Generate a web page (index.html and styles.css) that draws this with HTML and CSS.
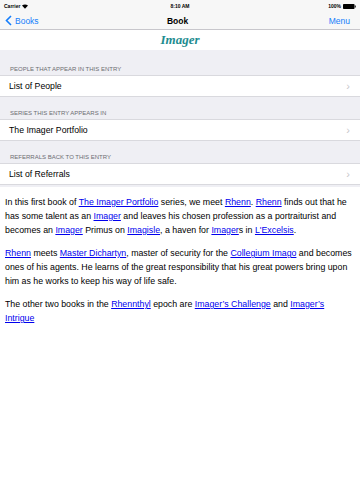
FILE: index.html
```html
<!DOCTYPE html>
<html lang="en">
<head>
    <meta charset="UTF-8">
    <title>Book</title>
    <link rel="stylesheet" href="styles.css">
</head>
<body>
    <div id="topbar">
        <div class="status">
            <span class="carrier">Carrier
                <svg width="6" height="5" viewBox="0 0 12 9"><path d="M6 9 L0 2.5 Q6 -2 12 2.5 Z" fill="#000"/></svg>
            </span>
            <span class="clock">8:10 AM</span>
            <span class="battery">100%
                <svg width="13" height="5" viewBox="0 0 26 10"><rect x="0" y="0" width="23" height="10" rx="1.5" fill="#000"/><rect x="23.5" y="3" width="2" height="4" fill="#000"/></svg>
            </span>
        </div>
        <div class="navbar">
            <a class="back">
                <svg width="7" height="11" viewBox="0 0 7 11"><path d="M6 1 L1.5 5.5 L6 10" fill="none" stroke="#157efb" stroke-width="1.6"/></svg>
                Books
            </a>
            <span class="title">Book</span>
            <a class="menu">Menu</a>
        </div>
    </div>

    <div class="entry-title">Imager</div>

    <div class="table">
        <div class="section-header first">PEOPLE THAT APPEAR IN THIS ENTRY</div>
        <div class="row">List of People <span class="chev">&rsaquo;</span></div>
        <div class="section-header">SERIES THIS ENTRY APPEARS IN</div>
        <div class="row">The Imager Portfolio <span class="chev">&rsaquo;</span></div>
        <div class="section-header">REFERRALS BACK TO THIS ENTRY</div>
        <div class="row">List of Referrals <span class="chev">&rsaquo;</span></div>
    </div>

    <div class="content">
        <p>In this first book of <a>The Imager Portfolio</a> series, we meet <a>Rhenn</a>. <a>Rhenn</a> finds out that he has some talent as an <a>Imager</a> and leaves his chosen profession as a portraiturist and becomes an <a>Imager</a> Primus on <a>Imagisle</a>, a haven for <a>Imager</a>s in <a>L'Excelsis</a>.</p>
        <p><a>Rhenn</a> meets <a>Master Dichartyn</a>, master of security for the <a>Collegium Imago</a> and becomes ones of his agents. He learns of the great responsibility that his great powers bring upon him as he works to keep his way of life safe.</p>
        <p>The other two books in the <a>Rhennthyl</a> epoch are <a>Imager’s Challenge</a> and <a>Imager’s Intrigue</a></p>
    </div>
</body>
</html>
```

FILE: styles.css
```css
body {
    margin: 0;
    padding: 0;
    font-family: "Liberation Sans", Arial, sans-serif;
    background-color: #ffffff;
    color: #000;
}

#topbar {
    background-color: #f7f7f7;
    border-bottom: 1px solid #c8c7cc;
    height: 29px;
}

.status {
    display: flex;
    justify-content: space-between;
    align-items: center;
    height: 12px;
    padding: 0 4px;
    font-size: 5px;
    font-weight: bold;
}

.status .clock {
    width: 60px;
    text-align: center;
}

.carrier, .battery {
    display: flex;
    align-items: center;
    gap: 2px;
    width: 60px;
}

.battery {
    justify-content: flex-end;
}

.navbar {
    display: flex;
    justify-content: space-between;
    align-items: center;
    height: 17px;
    padding: 0 10px 0 5px;
    font-size: 8.5px;
}

.back, .menu {
    color: #157efb;
    display: flex;
    align-items: center;
    gap: 3px;
    width: 60px;
}

.menu {
    justify-content: flex-end;
}

.navbar .title {
    font-weight: bold;
    font-size: 8.5px;
}

.entry-title {
    height: 20px;
    line-height: 20px;
    text-align: center;
    font-family: "Liberation Serif", "Times New Roman", serif;
    font-style: italic;
    font-weight: bold;
    font-size: 13px;
    color: #1e8c8f;
}

.table {
    background-color: #efeff4;
    padding-bottom: 2px;
}

.section-header {
    font-size: 6px;
    line-height: 7px;
    color: #6d6d72;
    padding: 13px 10px 2px;
    border-bottom: 1px solid #d9d9de;
}

.section-header.first {
    padding-top: 16px;
}

.row {
    background-color: #fff;
    height: 20px;
    display: flex;
    align-items: center;
    justify-content: space-between;
    padding: 0 10px 0 9px;
    font-size: 8.7px;
    border-bottom: 1px solid #d9d9de;
}

.chev {
    color: #c7c7cc;
    font-size: 11px;
}

.content {
    padding: 8px 6px 0 5px;
    font-size: 8.8px;
    line-height: 14px;
}

.content p {
    margin: 0 0 9px;
}

.content a {
    color: #0000ee;
    text-decoration: underline;
}
```
